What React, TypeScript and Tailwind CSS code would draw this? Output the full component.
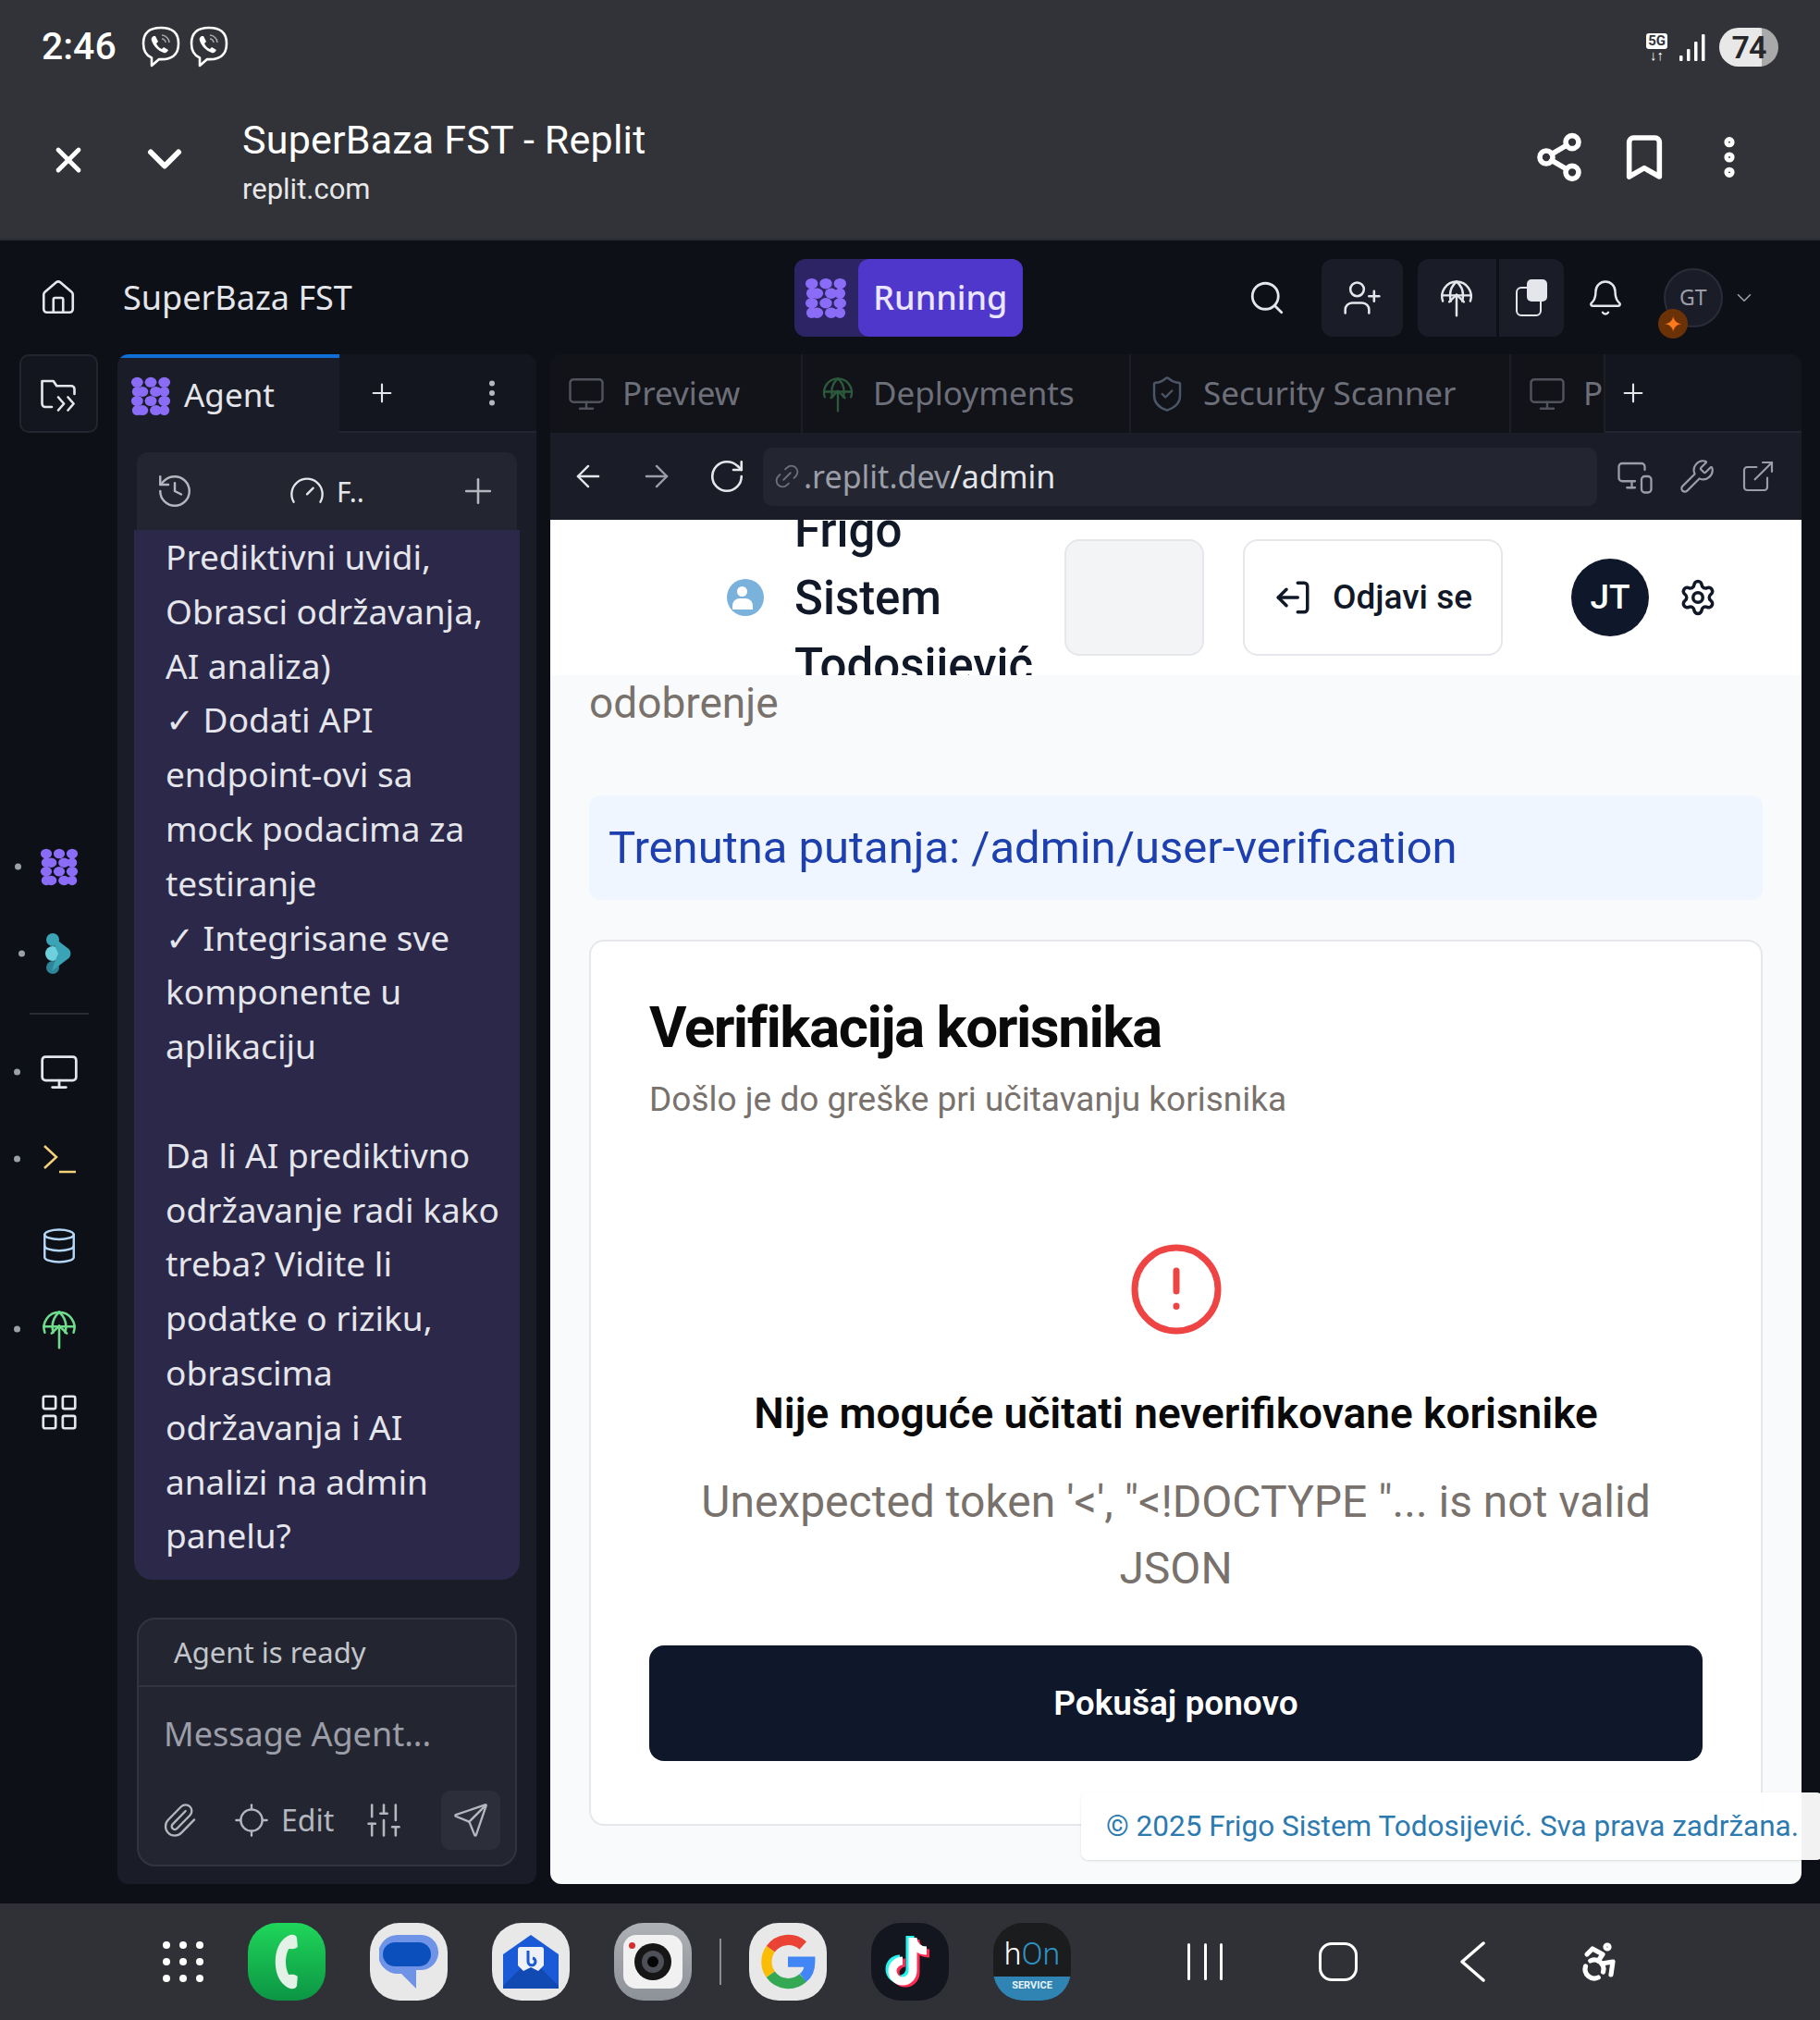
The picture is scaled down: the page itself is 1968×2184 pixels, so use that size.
import { ArrowLeft, ArrowRight, Bell, ChevronDown, Copy, Database, ExternalLink, Gauge, History, House, Link2, LogOut, Monitor, MonitorSmartphone, Paperclip, Plus, RotateCw, Search, Send, Settings, ShieldCheck, SlidersVertical, UserPlus, Wrench, X, Bookmark, Share2, EllipsisVertical, LayoutGrid, Locate, Accessibility } from "lucide-react";

const plex = "font-['Noto_Sans','Open_Sans',sans-serif]";

function AgentLogo({ size = 46 }: { size?: number }) {
  const rows = [
    [8, 8], [24, 8], [40, 8],
    [14, 19], [30, 19],
    [8, 30], [24, 30], [40, 30],
    [14, 41], [30, 41],
  ];
  return (
    <svg width={size} height={size} viewBox="0 0 48 48" fill="#8b6cf6">
      {rows.map(([x, y]) => (
        <ellipse key={`${x}-${y}`} cx={x} cy={y} rx="7" ry="6" />
      ))}
      <circle cx="8" cy="41" r="6" />
      <circle cx="40" cy="41" r="6" />
      <circle cx="40" cy="19" r="6" />
      <circle cx="8" cy="19" r="6" />
    </svg>
  );
}

function DeployIcon({ color, size = 42 }: { color: string; size?: number }) {
  return (
    <svg width={size} height={size} viewBox="0 0 24 24" fill="none" stroke={color} strokeWidth="1.4" strokeLinecap="round" strokeLinejoin="round">
      <path d="M3.5 14a9 9 0 1 1 17 0" />
      <path d="M3 10.5h18" />
      <path d="M12 2c-3 2.5-4 5.5-4 8.5 0 1.5.2 2.5.5 3.5" />
      <path d="M12 2c3 2.5 4 5.5 4 8.5 0 1.5-.2 2.5-.5 3.5" />
      <path d="M12 23V10M7.5 14.5 12 10l4.5 4.5" />
    </svg>
  );
}

function StatusBar() {
  return (
    <div className="flex h-[100px] items-center justify-between pl-[45px] pr-[45px] pt-[2px]">
      <div className="flex items-center gap-[26px]">
        <span className="font-['Roboto',sans-serif] text-[41px] font-medium text-white">2:46</span>
        <div className="flex gap-[8px]">
          <Viber />
          <Viber />
        </div>
      </div>
      <div className="flex items-center gap-[10px]">
        <div className="flex flex-col items-center">
          <span className="rounded-[3px] bg-white px-[2px] font-['Roboto',sans-serif] text-[15px] leading-[17px] font-bold text-[#323338]">5G</span>
          <span className="text-[15px] leading-[13px] font-bold text-white">↓↑</span>
        </div>
        <svg width="30" height="32" viewBox="0 0 30 32" fill="#fff" className="ml-[2px]">
          <rect x="1" y="25" width="3.5" height="6" rx="1" />
          <rect x="9" y="18" width="3.5" height="13" rx="1" />
          <rect x="17" y="10" width="3.5" height="21" rx="1" />
          <rect x="25" y="2" width="3.5" height="29" rx="1" />
        </svg>
        <div className="ml-[4px] flex h-[42px] w-[64px] items-center justify-center rounded-full bg-[linear-gradient(90deg,#e8e8e8_72%,#a9a9a9_72%)] font-['Roboto',sans-serif] text-[34px] font-semibold tracking-tight text-[#26272b]">74</div>
      </div>
    </div>
  );
}

function Viber() {
  return (
    <svg width="44" height="46" viewBox="0 0 44 46" fill="none" stroke="#fff" strokeWidth="2.6" strokeLinejoin="round">
      <path d="M22 2C10 2 3 7 3 19c0 8 3 13 9 15.500V43l8-7c13 1 21-4 21-17C41 7 34 2 22 2Z" />
      <path d="M14 11c-2 1-3 3-2 5 2 6 7 11 13 13 2 1 4-1 5-3l-5-3-2 2c-3-1-5-4-6-6l2-2-3-6h-2Z" fill="#fff" stroke="none" />
      <path d="M23 10c4 0 8 4 8 8M23 14c2 0 4 2 4 4" strokeWidth="1.500" stroke="#aaa" />
    </svg>
  );
}

function BrowserBar() {
  return (
    <div className="flex h-[160px] items-start pl-[52px] pr-[70px]">
      <X size={44} strokeWidth={2.6} className="mt-[51px] text-white" />
      <ChevronDown size={60} strokeWidth={2.4} className="ml-[52px] mt-[42px] text-white" />
      <div className="ml-[54px] mt-[21px] font-['Roboto',sans-serif] text-white">
        <div className="text-[43px] leading-[60px] tracking-[0.2px]">SuperBaza FST - Replit</div>
        <div className="mt-[2px] text-[31px] leading-[44px] text-[#e8e8ea]">replit.com</div>
      </div>
      <div className="ml-auto mt-[42px] flex items-center gap-[36px]">
        <Share2 size={56} strokeWidth={2.4} className="text-white" />
        <Bookmark size={56} strokeWidth={2.4} className="text-white" />
        <EllipsisVertical size={56} strokeWidth={2.8} className="text-white" />
      </div>
    </div>
  );
}

function TopNav() {
  return (
    <div className={`flex h-[123px] items-center pl-[42px] pr-[32px] ${plex}`}>
      <House size={42} strokeWidth={1.5} className="text-[#e4e6eb]" />
      <span className="ml-[49px] text-[36px] text-[#e4e6eb]">SuperBaza FST</span>
      <div className="ml-[478px] flex h-[84px] w-[247px] items-center rounded-[12px] bg-[#2d2465]">
        <div className="flex w-[69px] justify-center">
          <AgentLogo size={46} />
        </div>
        <div className="flex h-full flex-1 items-center justify-center rounded-[12px] bg-[#4f37cb] text-[36px] font-medium text-[#ebe6ff]">Running</div>
      </div>
      <Search size={42} strokeWidth={1.6} className="ml-[243px] text-[#e4e6eb]" />
      <div className="ml-[38px] flex h-[84px] w-[88px] items-center justify-center rounded-[12px] bg-[#1a1d27]">
        <UserPlus size={44} strokeWidth={1.4} className="text-[#e4e6eb]" />
      </div>
      <div className="ml-[16px] flex h-[84px] w-[158px] items-center rounded-[12px] bg-[#1a1d27]">
        <div className="flex h-full w-[88px] items-center justify-center border-r-[3px] border-[#0e1018]">
          <DeployIcon color="#e4e6eb" />
        </div>
        <div className="flex flex-1 justify-center">
          <div className="relative h-[40px] w-[34px]">
            <div className="absolute bottom-0 left-0 h-[32px] w-[28px] rounded-[6px] border-[2px] border-[#e4e6eb]" />
            <div className="absolute right-0 top-0 h-[24px] w-[22px] rounded-[5px] bg-[#e4e6eb]" />
          </div>
        </div>
      </div>
      <Bell size={42} strokeWidth={1.4} className="ml-[24px] text-[#e4e6eb]" />
      <div className="relative ml-[42px] flex h-[64px] w-[64px] items-center justify-center rounded-full border-[2px] border-[#2a2d38] bg-[#1a1d27] text-[23px] text-[#9b9ea8]">
        GT
        <div className="absolute -bottom-[14px] -left-[8px] flex h-[32px] w-[32px] items-center justify-center rounded-full bg-[#6b3207] text-[24px] leading-none text-[#ff7a1a]">✦</div>
      </div>
      <ChevronDown size={26} strokeWidth={1.5} className="ml-[10px] text-[#9b9ea8]" />
    </div>
  );
}

function Rail() {
  const dot = <span className="absolute -left-[27px] top-1/2 h-[7px] w-[7px] -translate-y-1/2 rounded-full bg-[#9ca0a8]" />;
  return (
    <div className="flex w-[127px] shrink-0 flex-col items-center">
      <div className="flex h-[85px] w-[85px] items-center justify-center rounded-[10px] border-2 border-[#22252f] bg-[#14161f] ml-[-1px]">
        <svg width="42" height="42" viewBox="0 0 24 24" fill="none" stroke="#e4e6eb" strokeWidth="1.500" strokeLinecap="round" strokeLinejoin="round">
          <path d="M8 20H4a2 2 0 0 1-2-2V4h7l2 3h9a2 2 0 0 1 2 2v3" />
          <path d="m12 14 3.500 4-3.500 4M18 14l3.500 4-3.500 4" />
        </svg>
      </div>
      <div className="relative mt-[447px] flex h-[44px] items-center">{dot}<AgentLogo size={42} /></div>
      <div className="relative mt-[50px] flex h-[44px] items-center">
        {dot}
        <svg width="34" height="44" viewBox="0 0 34 44" fill="#3aa3b5">
          <circle cx="10" cy="7" r="7" />
          <circle cx="10" cy="22" r="8" fill="#6fd0dd" />
          <circle cx="10" cy="37" r="7" fill="#2d8597" />
          <path d="M9 3 26 16a7 7 0 0 1 0 12L9 41l3-10 4-9-4-9Z" />
        </svg>
      </div>
      <div className="mt-[42px] h-[2px] w-[64px] bg-[#2a2c33]" />
      <div className="relative mt-[40px] flex h-[44px] items-center">{dot}<Monitor size={44} strokeWidth={1.5} className="text-[#e4e6eb]" /></div>
      <div className="relative mt-[50px] flex h-[44px] items-center">
        {dot}
        <svg width="44" height="36" viewBox="0 0 44 36" fill="none" stroke="#f3d27a" strokeWidth="2.500">
          <path d="m6 4 13 12L6 28" />
          <path d="M22 32h18" />
        </svg>
      </div>
      <div className="mt-[50px] flex h-[44px] items-center"><Database size={42} strokeWidth={1.4} className="text-[#b4d6f7]" /></div>
      <div className="relative mt-[46px] flex h-[44px] items-center">{dot}<DeployIcon color="#6fdc8c" size={44} /></div>
      <div className="mt-[46px] flex h-[44px] items-center"><LayoutGrid size={46} strokeWidth={1.4} className="text-[#e4e6eb]" /></div>
    </div>
  );
}

const messageLines = [
  "Prediktivni uvidi,",
  "Obrasci održavanja,",
  "AI analiza)",
  "✓ Dodati API",
  "endpoint-ovi sa",
  "mock podacima za",
  "testiranje",
  "✓ Integrisane sve",
  "komponente u",
  "aplikaciju",
  "",
  "Da li AI prediktivno",
  "održavanje radi kako",
  "treba? Vidite li",
  "podatke o riziku,",
  "obrascima",
  "održavanja i AI",
  "analizi na admin",
  "panelu?",
];

function AgentPanel() {
  return (
    <div className={`flex w-[453px] shrink-0 flex-col overflow-hidden rounded-[12px] bg-[#1a1d27] ${plex}`}>
      <div className="flex h-[85px] shrink-0 bg-[#14161f]">
        <div className="flex w-[240px] items-center border-t-[4px] border-[#0f6fd6] bg-[#1a1d27] pl-[14px]">
          <AgentLogo size={44} />
          <span className="ml-[14px] text-[35px] text-[#e4e6eb]">Agent</span>
        </div>
        <div className="flex flex-1 items-center border-b-2 border-[#22252f] pl-[30px] pr-[30px]">
          <Plus size={32} strokeWidth={1.6} className="text-[#e4e6eb]" />
          <EllipsisVertical size={36} strokeWidth={2} className="ml-auto text-[#b4b7bf]" />
        </div>
      </div>
      <div className="flex min-h-0 flex-1 flex-col px-[18px]">
        <div className="mt-[21px] flex h-[84px] shrink-0 items-center rounded-t-[12px] bg-[#232630] pl-[20px] pr-[20px] ml-[3px] mr-[3px]">
          <History size={42} strokeWidth={1.4} className="text-[#b4b7bf]" />
          <Gauge size={40} strokeWidth={1.4} className="ml-[102px] text-[#e4e6eb]" />
          <span className="ml-[12px] text-[30px] text-[#e4e6eb]">F..</span>
          <Plus size={44} strokeWidth={1.4} className="ml-auto text-[#b4b7bf]" />
        </div>
        <div className="h-[1135px] shrink-0 overflow-hidden rounded-b-[20px] bg-[#2c2849] pl-[34px] pt-[0px] text-[37px] leading-[58.800px] text-[#e4e6eb]">
          {messageLines.map((line, i) => (
            <div key={i} className="h-[58.800px] whitespace-nowrap">{line}</div>
          ))}
        </div>
        <div className="mt-[41px] flex h-[269px] shrink-0 flex-col rounded-[20px] border-2 border-[#32353f] bg-[#232630] ml-[3px] mr-[3px]">
          <div className="flex h-[73px] items-center border-b-2 border-[#32353f] pl-[38px] text-[31px] text-[#c3c6cd]">Agent is ready</div>
          <div className="pl-[27px] pt-[26px] text-[36px] leading-[50px] text-[#9b9ea8]">Message Agent...</div>
          <div className="mt-auto mb-[16px] flex items-center pl-[24px] pr-[16px]">
            <Paperclip size={40} strokeWidth={1.4} className="text-[#b4b7bf]" />
            <Locate size={40} strokeWidth={1.4} className="ml-[38px] text-[#b4b7bf]" />
            <span className="ml-[12px] text-[32px] text-[#b4b7bf]">Edit</span>
            <SlidersVertical size={44} strokeWidth={1.4} className="ml-[32px] text-[#b4b7bf]" />
            <div className="ml-auto flex h-[64px] w-[64px] items-center justify-center rounded-[10px] bg-[#2c2f3a]">
              <Send size={40} strokeWidth={1.4} className="text-[#b4b7bf]" />
            </div>
          </div>
        </div>
      </div>
    </div>
  );
}

function PreviewTab({ icon, label, width }: { icon: React.ReactNode; label: string; width: string }) {
  return (
    <div className={`flex h-full shrink-0 items-center gap-[18px] overflow-hidden border-r-2 border-[#1c1e25] pl-[18px] ${width}`}>
      {icon}
      <span className="whitespace-nowrap text-[35px] text-[#6d7079]">{label}</span>
    </div>
  );
}

function Page() {
  return (
    <div className="relative min-h-0 flex-1 rounded-b-[12px] bg-[#f9fafb] font-['Roboto',sans-serif]">
      <div className="flex h-[168px] items-center overflow-hidden bg-white">
        <div className="relative ml-[191px] h-[40px] w-[40px] rounded-full bg-[#7ab2dc]">
          <div className="absolute left-[11px] top-[8px] h-[11px] w-[11px] rounded-full bg-white" />
          <div className="absolute bottom-[7px] left-[6px] h-[12px] w-[22px] rounded-t-[8px] bg-white" />
        </div>
        <div className="ml-[33px] w-[280px] shrink-0 text-[51px] leading-[73px] font-medium text-[#111827]">
          Frigo Sistem Todosijević
        </div>
        <div className="ml-[12px] h-[126px] w-[151px] rounded-[16px] border-2 border-[#e5e7eb] bg-[#f3f4f6]" />
        <div className="ml-[42px] flex h-[126px] w-[281px] items-center justify-center gap-[22px] rounded-[16px] border-2 border-[#e5e7eb] bg-white text-[37px] font-medium text-[#111827]">
          <LogOut size={42} strokeWidth={2} className="rotate-180" />
          Odjavi se
        </div>
        <div className="ml-[74px] flex h-[84px] w-[84px] items-center justify-center rounded-full bg-[#0f172a] text-[37px] font-medium text-white">JT</div>
        <Settings size={42} strokeWidth={2} className="ml-[32px] text-[#111827]" />
      </div>
      <div className="h-[130px] overflow-hidden pl-[42px]">
        <div className="text-[46px] leading-[60px] text-[#78716c]">odobrenje</div>
      </div>
      <div className="mx-[42px] flex h-[113px] items-center rounded-[12px] bg-[#eff6ff] pl-[21px] text-[49px] text-[#1e40af]">
        Trenutna putanja: /admin/user-verification
      </div>
      <div className="mx-[42px] mt-[43px] h-[958px] rounded-[16px] border-2 border-[#e5e7eb] bg-white px-[63px] pt-[55px]">
        <div className="text-[62px] leading-[76px] font-bold tracking-[-1.500px] text-[#0a0a0a]">Verifikacija korisnika</div>
        <div className="mt-[17px] text-[37px] leading-[46px] text-[#78716c]">Došlo je do greške pri učitavanju korisnika</div>
        <div className="mt-[132px] flex flex-col items-center text-center">
          <svg width="100" height="100" viewBox="0 0 100 100" fill="none" stroke="#ef4444" strokeWidth="7" strokeLinecap="round">
            <circle cx="50" cy="50" r="45" />
            <path d="M50 30v22M50 68v.5" />
          </svg>
          <div className="mt-[54px] text-[46px] leading-[60px] font-semibold text-[#0a0a0a]">Nije moguće učitati neverifikovane korisnike</div>
          <div className="mt-[30px] w-[1080px] text-[48px] leading-[72px] text-[#78716c]">Unexpected token '&lt;', "&lt;!DOCTYPE "... is not valid JSON</div>
        </div>
        <div className="mt-[47px] flex h-[125px] items-center justify-center rounded-[16px] bg-[#0f172a] text-[37px] font-semibold text-white">Pokušaj ponovo</div>
      </div>
      <div className="absolute -right-[24px] bottom-[26px] flex h-[73px] items-center rounded-[8px] bg-white/95 px-[27px] text-[31.500px] whitespace-nowrap text-[#2b7ab0] shadow-sm">
        © 2025 Frigo Sistem Todosijević. Sva prava zadržana.
      </div>
    </div>
  );
}

function PreviewPanel() {
  return (
    <div className={`flex min-w-0 flex-1 flex-col rounded-[12px] bg-[#1a1d27] ${plex}`}>
      <div className="flex h-[85px] shrink-0 overflow-hidden rounded-t-[12px] bg-[#121319]">
        <PreviewTab width="w-[273px]" label="Preview" icon={<Monitor size={42} strokeWidth={1.4} className="shrink-0 text-[#50535b]" />} />
        <PreviewTab width="w-[355px]" label="Deployments" icon={<DeployIcon color="#2c5a3d" size={40} />} />
        <PreviewTab width="w-[411px]" label="Security Scanner" icon={<ShieldCheck size={42} strokeWidth={1.4} className="shrink-0 text-[#4b5666]" />} />
        <PreviewTab width="w-[102px]" label="Preview" icon={<Monitor size={42} strokeWidth={1.4} className="shrink-0 text-[#50535b]" />} />
        <div className="flex flex-1 items-center border-b-2 border-[#22252f] bg-[#14161f] pl-[14px]">
          <Plus size={32} strokeWidth={1.6} className="text-[#e4e6eb]" />
        </div>
      </div>
      <div className="flex h-[94px] shrink-0 items-center pl-[22px] pr-[20px]">
        <ArrowLeft size={38} strokeWidth={1.5} className="text-[#e4e6eb]" />
        <ArrowRight size={38} strokeWidth={1.5} className="ml-[36px] text-[#9b9ea8]" />
        <RotateCw size={42} strokeWidth={1.5} className="ml-[36px] text-[#e4e6eb]" />
        <div className="ml-[18px] flex h-[63px] w-[902px] items-center rounded-[10px] bg-[#232630] pl-[10px] text-[34px]">
          <Link2 size={32} strokeWidth={1.4} className="-rotate-45 text-[#6d7079]" />
          <span className="ml-[2px] text-[#9b9ea8]">.replit.dev</span>
          <span className="text-[#e4e6eb]">/admin</span>
        </div>
        <MonitorSmartphone size={42} strokeWidth={1.3} className="ml-[20px] text-[#9b9ea8]" />
        <Wrench size={40} strokeWidth={1.3} className="ml-[26px] text-[#9b9ea8]" />
        <ExternalLink size={40} strokeWidth={1.3} className="ml-[26px] text-[#9b9ea8]" />
      </div>
      <Page />
    </div>
  );
}

function AppIcon({ bg, children, className = "" }: { bg: string; children: React.ReactNode; className?: string }) {
  return (
    <div className={`flex h-[84px] w-[84px] items-center justify-center overflow-hidden rounded-[32px] ${className}`} style={{ background: bg }}>
      {children}
    </div>
  );
}

function Dock() {
  return (
    <div className="flex h-[126px] shrink-0 items-center bg-[#303136] pl-[176px]">
      <svg width="44" height="44" viewBox="0 0 44 44" fill="#fff">
        {[4, 22, 40].map((y) => [4, 22, 40].map((x) => <circle key={`${x}-${y}`} cx={x} cy={y} r="4" />))}
      </svg>
      <div className="ml-[48px] flex items-center gap-[48px]">
        <AppIcon bg="linear-gradient(#1fd65a,#0c9544)">
          <svg width="40" height="64" viewBox="0 0 40 64">
            <path d="M26 3C10 8 6 22 6 32s4 24 20 29c6 1 8-1 9-3l1-10c-4-3-9-2-12-2-3-5-4-9-4-14s1-9 4-14c3 0 8 1 12-2l-1-10C34 4 32 2 26 3Z" fill="#e3f1e6" transform="translate(3 0) scale(.8 1)" />
          </svg>
        </AppIcon>
        <AppIcon bg="#e8e8e8">
          <svg width="64" height="60" viewBox="0 0 64 60">
            <path d="M20 1h24a19 19 0 0 1 2 38H40v20L24 43h-4A21 21 0 0 1 20 1Z" fill="#6f93e6" />
            <rect x="4" y="9" width="52" height="26" rx="13" fill="#0b4fbd" />
          </svg>
        </AppIcon>
        <AppIcon bg="#e8e8e8">
          <svg width="62" height="58" viewBox="0 0 62 58">
            <path d="M1 21 31 0l30 21v34a3 3 0 0 1-3 3H4a3 3 0 0 1-3-3Z" fill="#1a5ad6" />
            <path d="M1 55 24 32l7 4 7-4 23 23v3H1Z" fill="#124ab3" />
            <path d="M17 16a3 3 0 0 1 3-3h22a3 3 0 0 1 3 3v17l-6 6-8-4-8 4-6-6Z" fill="#eef2f8" />
            <path d="M28 17v12a4 4 0 1 0 5-4" fill="none" stroke="#1a5ad6" strokeWidth="3" />
          </svg>
        </AppIcon>
        <AppIcon bg="linear-gradient(#aeb2b6,#8d9198)">
          <div className="relative flex h-[58px] w-[64px] items-center justify-center rounded-[14px] bg-[#f1f1f1]">
            <span className="absolute left-[6px] top-[8px] h-[7px] w-[7px] rounded-full bg-[#d5302d]" />
            <div className="flex h-[40px] w-[40px] items-center justify-center rounded-full bg-[#161616]">
              <div className="flex h-[24px] w-[24px] items-center justify-center rounded-full bg-[#4d5057]">
                <div className="h-[12px] w-[12px] rounded-full bg-[#050505]" />
              </div>
            </div>
          </div>
        </AppIcon>
        <div className="-mx-[18px] h-[50px] w-[2px] bg-[#8b8c90]" />
        <AppIcon bg="#e8e8e8">
          <svg width="60" height="60" viewBox="0 0 48 48" fill="none" strokeWidth="9">
            <path d="M37 10A19 19 0 0 0 9 13" stroke="#ea4335" />
            <path d="M9 13a19 19 0 0 0 0 22" stroke="#fbbc05" />
            <path d="M9 35a19 19 0 0 0 28 3" stroke="#34a853" />
            <path d="M37 38c4-3 6-8 6-14H24" stroke="#4285f4" />
          </svg>
        </AppIcon>
        <AppIcon bg="#14161f">
          <svg width="56" height="60" viewBox="0 0 56 60" fill="none" strokeWidth="9">
            <path d="M31 4v36a11 11 0 1 1-11-11" stroke="#25f4ee" transform="translate(-3 -2)" />
            <path d="M31 4v36a11 11 0 1 1-11-11M31 6c1 8 7 13 15 13" stroke="#fe2c55" transform="translate(3 2)" />
            <path d="M31 4v36a11 11 0 1 1-11-11M31 5c1 8 7 13 15 13" stroke="#fff" />
          </svg>
        </AppIcon>
        <div className="flex h-[84px] w-[84px] flex-col overflow-hidden rounded-[32px] bg-[#1b1c1e] font-['Roboto',sans-serif]">
          <div className="flex h-[58px] items-end justify-center pb-[6px] text-[34px] leading-[38px] font-light">
            <span className="text-white">h</span>
            <span className="text-[#2f92c4]">On</span>
          </div>
          <div className="flex flex-1 items-start justify-center bg-[#2f84b3] pt-[3px] text-[11px] leading-[14px] font-bold text-[#e7f3fa]">SERVICE</div>
        </div>
      </div>
      <div className="ml-[126px] flex h-[40px] w-[38px] justify-between">
        <span className="h-full w-[3px] rounded-full bg-white" />
        <span className="h-full w-[3px] rounded-full bg-white" />
        <span className="h-full w-[3px] rounded-full bg-white" />
      </div>
      <div className="ml-[104px] h-[42px] w-[42px] rounded-[14px] border-[3px] border-white" />
      <svg width="32" height="44" viewBox="0 0 32 44" fill="none" stroke="#fff" strokeWidth="3.500" strokeLinecap="round" strokeLinejoin="round" className="ml-[108px]">
        <path d="M28 2 5 22l23 20" />
      </svg>
      <Accessibility size={48} strokeWidth={2.6} className="ml-[98px] text-white" />
    </div>
  );
}

export default function App() {
  return (
    <div className="flex h-[2184px] w-[1968px] flex-col overflow-hidden bg-[#0e1018]">
      <div className="h-[260px] shrink-0 border-b-[2px] border-[#2a2b30] bg-[#323338]">
        <StatusBar />
        <BrowserBar />
      </div>
      <TopNav />
      <div className="flex min-h-0 flex-1 pb-[21px] pr-[20px]">
        <Rail />
        <AgentPanel />
        <div className="w-[15px] shrink-0" />
        <PreviewPanel />
      </div>
      <Dock />
    </div>
  );
}
